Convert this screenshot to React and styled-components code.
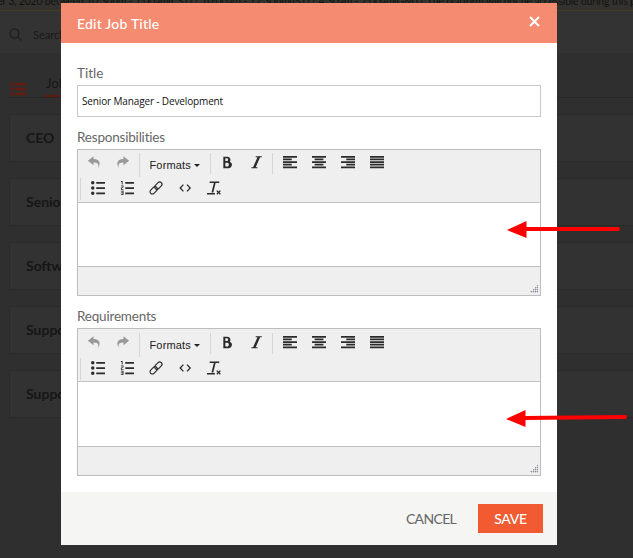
import React from 'react';
import styled, { createGlobalStyle } from 'styled-components';

const GlobalStyle = createGlobalStyle`
  * {
    box-sizing: border-box;
  }
  body {
    margin: 0;
    background: #2f2f2f;
    font-family: Lato, 'Liberation Sans', sans-serif;
  }
`;

const Screen = styled.div`
  position: relative;
  width: 633px;
  height: 558px;
  overflow: hidden;
`;

const Banner = styled.div`
  height: 11px;
  background: #33322e;
  border-bottom: 1px solid #403d24;
  color: #121212;
  font-size: 10.5px;
  line-height: 15px;
  white-space: nowrap;
  overflow: hidden;

  span {
    display: block;
    margin: -6px 0 0 -3px;
    letter-spacing: -0.2px;
  }
`;

const SearchBar = styled.div`
  display: flex;
  align-items: center;
  gap: 11px;
  height: 42px;
  padding: 5px 0 0 9px;
  background: #333;
  color: #191919;
  font-size: 11px;
`;

const Tabs = styled.div`
  display: flex;
  align-items: flex-end;
  gap: 17px;
  height: 45px;
  margin-left: 9px;
  border-bottom: 1px solid #272727;
`;

const Tab = styled.div`
  height: 21px;
  padding: 0 2px;
  border-bottom: 2px solid #5c1a10;
  color: #161616;
  font-size: 13px;
  line-height: 14px;
`;

const ListIcon = styled.svg`
  display: block;
  margin-bottom: 1px;
`;

const Cards = styled.div`
  display: flex;
  flex-direction: column;
  gap: 16px;
  padding: 16px 0 0 9px;
`;

const Card = styled.div`
  height: 48px;
  padding-left: 16px;
  background: #323232;
  border: 1px solid #2a2a2a;
  border-right: 0;
  color: #161616;
  font-size: 14px;
  font-weight: 700;
  line-height: 46px;
`;

const Modal = styled.div`
  position: absolute;
  top: 3px;
  left: 61px;
  width: 496px;
  height: 542px;
  display: flex;
  flex-direction: column;
  background: #fff;
`;

const ModalHeader = styled.div`
  display: flex;
  flex: none;
  align-items: center;
  justify-content: space-between;
  height: 40px;
  padding: 0 17px 0 16px;
  background: #f58b70;
  color: #fff;
  font-size: 14px;
  font-weight: 500;
  letter-spacing: 0.22px;
`;

const CloseIcon = styled.svg`
  display: block;
  margin-top: -3px;
`;

const ModalBody = styled.div`
  flex: 1;
  padding: 21px 16px 0;
`;

const Label = styled.div`
  height: ${props => props.$height || 21}px;
  padding-top: ${props => props.$top || 0}px;
  color: #666;
  font-size: 13.5px;
  line-height: 18px;
  letter-spacing: ${props => props.$spacing || 0}px;
`;

const Input = styled.input`
  display: block;
  width: 100%;
  height: 32px;
  padding: 0 4px;
  border: 1px solid #c8c8c8;
  border-radius: 0;
  color: #111;
  font-family: 'Open Sans', sans-serif;
  font-size: 10px;
  letter-spacing: -0.14px;
  outline: none;
`;

const EditorBox = styled.div`
  height: ${props => props.$height}px;
  display: flex;
  flex-direction: column;
  border: 1px solid #bdbdbd;
`;

const Toolbar = styled.div`
  flex: none;
  height: 53px;
  padding: ${props => props.$top}px 2px 0;
  background: #efefef;
  border-bottom: 1px solid #c3c3c3;
`;

const ToolbarRow = styled.div`
  display: flex;
  align-items: flex-start;
  height: 25px;
`;

const Group = styled.div`
  display: flex;
  height: ${props => props.$height || 21}px;
  width: ${props => props.$width || 'auto'};
  padding-top: ${props => props.$top || 2}px;
  padding-left: ${props => (props.$line ? 2 : 0)}px;
  border-left: ${props => (props.$line ? '1px solid #d5d5d5' : '0')};
`;

const ToolButton = styled.button`
  display: flex;
  align-items: flex-start;
  width: 29px;
  height: 16px;
  padding: 0 0 0 ${props => (props.$muted ? 7 : 8)}px;
  border: 0;
  background: none;
  color: ${props => (props.$muted ? '#999' : '#2b2b2b')};

  svg {
    display: block;
    flex: none;
    overflow: visible;
  }
`;

const FormatsButton = styled.button`
  display: flex;
  align-items: center;
  gap: 3px;
  height: 20px;
  padding: 0 0 0 7.5px;
  border: 0;
  background: none;
  color: #222;
  font-family: 'Liberation Sans', Arial, sans-serif;
  font-size: 11px;
  letter-spacing: 0.15px;
`;

const EditArea = styled.div`
  flex: 1;
`;

const StatusBar = styled.div`
  display: flex;
  flex: none;
  align-items: flex-end;
  justify-content: flex-end;
  height: 29px;
  padding: 0 2px 2px;
  background: #efefef;
  border-top: 1px solid #bdbdbd;
`;

const ModalFooter = styled.div`
  display: flex;
  flex: none;
  align-items: center;
  justify-content: flex-end;
  height: 53px;
  padding: 0 14px 0 0;
  background: #f5f5f3;
`;

const FooterButton = styled.button`
  height: 29px;
  width: ${props => (props.$primary ? 65 : 94)}px;
  padding: 0 0 1px;
  border: 0;
  background: ${props => (props.$primary ? '#f25a32' : 'transparent')};
  color: ${props => (props.$primary ? '#fff' : '#666')};
  font-family: Lato, sans-serif;
  font-size: 14px;
  font-weight: ${props => (props.$primary ? 500 : 400)};
  letter-spacing: ${props => (props.$primary ? -0.3 : -0.65)}px;
`;

const Arrow = styled.svg`
  position: absolute;
  top: ${props => props.$top}px;
  left: ${props => props.$left}px;
`;

const icons = {
  undo: 'M781 980c93-190 112-440-303-430v200L64 420 478 90v208c504-13 544 402 303 682z',
  redo: 'M546 298V90l414 330-414 330V550c-416-10-397 240-303 430-240-280-201-695 303-682z',
  bold:
    'M645 500a240 240 0 0 0-165-380H170v840h350a240 240 0 0 0 125-460zM320 240h110c52 0 90 45 90 100s-38 100-90 100H320zM470 840H320V570h150c62 0 100 60 100 135s-38 135-100 135z',
  italic: 'M866 100v64H738L418 896h128v64H98v-64h128L546 164H418v-64z',
  left: 'M0 64h1024v128H0zM0 256h640v128H0zM0 640h640v128H0zM0 448h1024v128H0zM0 832h1024v128H0z',
  center:
    'M0 64h1024v128H0zM192 256h640v128H192zM192 640h640v128H192zM0 448h1024v128H0zM0 832h1024v128H0z',
  right:
    'M0 64h1024v128H0zM384 256h640v128H384zM384 640h640v128H384zM0 448h1024v128H0zM0 832h1024v128H0z',
  justify:
    'M0 64h1024v128H0zM0 256h1024v128H0zM0 640h1024v128H0zM0 448h1024v128H0zM0 832h1024v128H0z',
  bullets:
    'M384 64h640v128H384zM384 448h640v128H384zM384 832h640v128H384zM0 128a128 128 0 1 0 256 0 128 128 0 1 0-256 0zM0 512a128 128 0 1 0 256 0 128 128 0 1 0-256 0zM0 896a128 128 0 1 0 256 0 128 128 0 1 0-256 0z',
  numbers:
    'M384 832h640v128H384zM384 448h640v128H384zM384 64h640v128H384zM192 0v256h-64V64H64V0zM128 526v50h128v64H64V490l128-60v-46H64v-64h192v146zM256 704v320H64v-64h128v-64H64v-64h128v-64H64v-64z',
  clear:
    'M0 880h576v110H0zM192 40h704v112H630L460 850H330L500 152H192zM1010 930l-70 70-95-95-95 95-65-70 95-95-95-95 65-65 95 95 95-95 70 65-95 95z',
};

const Icon = ({ name }) => (
  <svg width="14" height="14" viewBox="0 0 1024 1024" fill="currentColor">
    <path d={icons[name]} />
  </svg>
);

const LinkIcon = () => (
  <svg
    width="14"
    height="14"
    viewBox="0 0 14 14"
    fill="none"
    stroke="currentColor"
    strokeWidth="1.2"
  >
    <g transform="rotate(-45 7 7)">
      <rect x="-0.5" y="4.7" width="8.4" height="4.6" rx="2.3" />
      <rect x="6.1" y="4.7" width="8.4" height="4.6" rx="2.3" />
    </g>
  </svg>
);

const CodeIcon = () => (
  <svg
    width="14"
    height="14"
    viewBox="0 0 14 14"
    fill="none"
    stroke="currentColor"
    strokeWidth="1.3"
  >
    <path d="M5.4 3.6 2.2 7l3.2 3.4M9 3.6 12.2 7 9 10.4" />
  </svg>
);

const ResizeGrip = () => (
  <svg width="8" height="8" viewBox="0 0 8 8" fill="#8b919c" shapeRendering="crispEdges">
    <path d="M7 0h1v1H7zM5 2h1v1H5zM7 2h1v1H7zM3 4h1v1H3zM5 4h1v1H5zM7 4h1v1H7zM1 6h1v1H1zM3 6h1v1H3zM5 6h1v1H5zM7 6h1v1H7z" />
    <path
      d="M6 2h1v1H6zM4 4h1v1H4zM6 4h1v1H6zM0 6h1v1H0zM2 6h1v1H2zM4 6h1v1H4zM6 6h1v1H6zM7 1h1v1H7zM5 3h1v1H5zM7 3h1v1H7zM3 5h1v1H3zM5 5h1v1H5zM7 5h1v1H7zM1 7h1v1H1zM3 7h1v1H3zM5 7h1v1H5zM7 7h1v1H7z"
      opacity="0.4"
    />
  </svg>
);

const Tool = ({ name, muted }) => (
  <ToolButton type="button" aria-label={name} $muted={muted}>
    <Icon name={name} />
  </ToolButton>
);

const Editor = ({ height, top }) => (
  <EditorBox $height={height}>
    <Toolbar $top={top}>
      <ToolbarRow>
        <Group $width="59px">
          <Tool name="undo" muted />
          <Tool name="redo" muted />
        </Group>
        <Group $line $width="71px" $height={24}>
          <FormatsButton type="button">
            Formats
            <svg width="6" height="3" viewBox="0 0 6 3" fill="currentColor">
              <path d="M0 0h6L3 3z" />
            </svg>
          </FormatsButton>
        </Group>
        <Group $line $width="62px">
          <Tool name="bold" />
          <Tool name="italic" />
        </Group>
        <Group $line>
          <Tool name="left" />
          <Tool name="center" />
          <Tool name="right" />
          <Tool name="justify" />
        </Group>
      </ToolbarRow>
      <ToolbarRow>
        <Group $line $height={22} $top={3}>
          <Tool name="bullets" />
          <Tool name="numbers" />
          <ToolButton type="button" aria-label="link">
            <LinkIcon />
          </ToolButton>
          <ToolButton type="button" aria-label="code">
            <CodeIcon />
          </ToolButton>
          <Tool name="clear" />
        </Group>
      </ToolbarRow>
    </Toolbar>
    <EditArea />
    <StatusBar>
      <ResizeGrip />
    </StatusBar>
  </EditorBox>
);

const jobs = ['CEO', 'Senior Manager', 'Software Engineer', 'Support Engineer', 'Support Lead'];

const App = () => (
  <>
    <GlobalStyle />
    <Screen>
      <Banner>
        <span>
          er 3, 2020 between 10:30pm - 1:00am(CST) / 10:00am - 12:30pm(IST) / 4:30am - 7:00am(GMT).
          The platform will not be accessible during this period
        </span>
      </Banner>
      <SearchBar>
        <svg width="13" height="13" viewBox="0 0 13 13" fill="none" stroke="#202020" strokeWidth="1.5">
          <circle cx="5.5" cy="5.5" r="4.4" />
          <path d="M8.7 8.7l3.8 3.8" />
        </svg>
        <span>Search</span>
      </SearchBar>
      <Tabs>
        <ListIcon width="18" height="14" viewBox="0 0 18 14" fill="#641c11">
          <circle cx="3" cy="2" r="1.8" />
          <circle cx="3" cy="7" r="1.8" />
          <circle cx="3" cy="12" r="1.8" />
          <path d="M6 1h11.5v2.4H6zM6 5.8h11.5v2.4H6zM6 10.8h11.5v2.4H6z" />
        </ListIcon>
        <Tab>Job Titles</Tab>
      </Tabs>
      <Cards>
        {jobs.map(job => (
          <Card key={job}>{job}</Card>
        ))}
      </Cards>

      <Modal>
        <ModalHeader>
          <span>Edit Job Title</span>
          <CloseIcon width="11" height="11" viewBox="0 0 11 11" stroke="#fff" strokeWidth="2">
            <path d="M1 1l9 9M10 1L1 10" />
          </CloseIcon>
        </ModalHeader>
        <ModalBody>
          <Label>Title</Label>
          <Input defaultValue="Senior Manager - Development" />
          <Label $height={32} $top={11} $spacing={-0.2}>
            Responsibilities
          </Label>
          <Editor height={147} top={3} />
          <Label $height={32} $top={11} $spacing={-0.2}>
            Requirements
          </Label>
          <Editor height={148} top={4} />
        </ModalBody>
        <ModalFooter>
          <FooterButton type="button">CANCEL</FooterButton>
          <FooterButton type="button" $primary>
            SAVE
          </FooterButton>
        </ModalFooter>
      </Modal>

      <Arrow $top={220} $left={507} width="114" height="19" viewBox="0 0 114 19" fill="red">
        <path d="M0 10L19.5 1v17z" />
        <path d="M18 9h93" stroke="red" strokeWidth="4" strokeLinecap="round" />
      </Arrow>
      <Arrow $top={409} $left={506} width="122" height="19" viewBox="0 0 122 19" fill="red">
        <path d="M0 10L19.5 1v17z" />
        <path d="M18 9l101-1" stroke="red" strokeWidth="4" strokeLinecap="round" />
      </Arrow>
    </Screen>
  </>
);

export default App;
